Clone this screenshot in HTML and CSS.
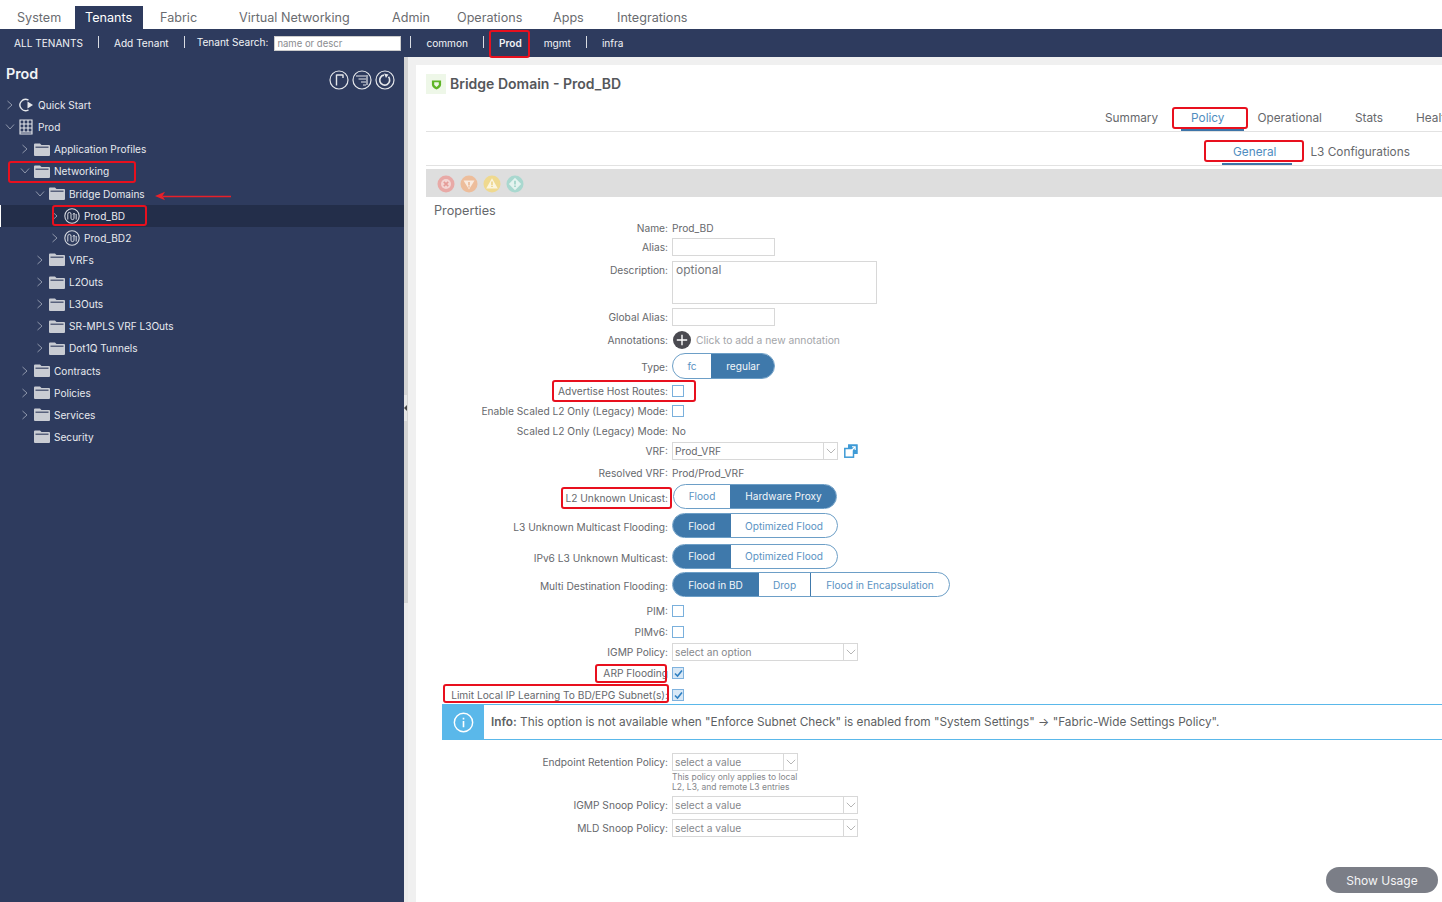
FILE: index.html
```html
<!DOCTYPE html>
<html lang="en">
<head>
<meta charset="utf-8">
<title>Bridge Domain - Prod_BD</title>
<link rel="stylesheet" href="styles.css">
</head>
<body>
<svg class="defs" width="0" height="0" aria-hidden="true">
  <symbol id="folder" viewBox="0 0 16 13">
    <path d="M0 1.5Q0 .5 1 .5H6L7.5 2H15Q16 2 16 3V12Q16 13 15 13H1Q0 13 0 12Z" fill="#c9ccd3"/>
    <rect x="1.5" y="3.6" width="13" height="1.2" fill="#3c4866"/>
  </symbol>
  <symbol id="chev-r" viewBox="0 0 8 10"><path d="M1.5 1 L6 5 L1.5 9" fill="none" stroke="#8f97ab" stroke-width="1"/></symbol>
  <symbol id="chev-d" viewBox="0 0 10 8"><path d="M1 1.5 L5 6 L9 1.5" fill="none" stroke="#8f97ab" stroke-width="1"/></symbol>
  <symbol id="bd" viewBox="0 0 16 16">
    <circle cx="8" cy="8" r="7.2" fill="none" stroke="#d5d8df" stroke-width="1.1"/>
    <path d="M3.8 11.5V6.2Q3.8 4.4 5.4 4.4T7 6.2V10.2Q7 11.6 8.5 11.6T10 10.2V5.2M10 5.2L8.9 6.5M10 5.2L11 6.5M12.2 11.5V6" fill="none" stroke="#d5d8df" stroke-width="1"/>
  </symbol>
  <symbol id="caret" viewBox="0 0 10 6"><path d="M.8 .8 L5 5 L9.2 .8" fill="none" stroke="#b5b5b5" stroke-width="1"/></symbol>
  <symbol id="tick" viewBox="0 0 11 11"><path d="M2 5.5 L4.5 8 L9 2.5" fill="none" stroke="#2f7fc1" stroke-width="1.6"/></symbol>
</svg>

<div class="app">
  <nav class="topbar">
    <span class="tab t1">System</span>
    <span class="tab t2 active">Tenants</span>
    <span class="tab t3">Fabric</span>
    <span class="tab t4">Virtual Networking</span>
    <span class="tab t5">Admin</span>
    <span class="tab t6">Operations</span>
    <span class="tab t7">Apps</span>
    <span class="tab t8">Integrations</span>
  </nav>

  <nav class="subnav">
    <span class="s1">ALL TENANTS</span><i class="bar"></i>
    <span>Add Tenant</span><i class="bar"></i>
    <span class="search-label">Tenant Search:</span>
    <input class="search" placeholder="name or descr">
    <i class="bar b-tight"></i>
    <span>common</span><i class="bar"></i>
    <span class="strong">Prod</span><i class="bar b-close"></i>
    <span>mgmt</span><i class="bar"></i>
    <span>infra</span>
  </nav>

  <div class="workspace">
    <aside class="sidebar">
      <div class="side-head">
        <h2>Prod</h2>
        <div class="side-tools">
          <svg class="tool" viewBox="0 0 20 20"><circle cx="10" cy="10" r="9" fill="none" stroke="#e4e6ea" stroke-width="1.2"/><path d="M7.5 15.5V4.5M7.5 5H14.5M14 5V8" fill="none" stroke="#e4e6ea" stroke-width="1.4"/></svg>
          <svg class="tool" viewBox="0 0 20 20"><circle cx="10" cy="10" r="9" fill="none" stroke="#e4e6ea" stroke-width="1.2"/><path d="M4 6H14M6.5 9H14M9 12H14M11 15H14M15 5V15" fill="none" stroke="#e4e6ea" stroke-width="1.2"/></svg>
          <svg class="tool" viewBox="0 0 20 20"><circle cx="10" cy="10" r="9" fill="none" stroke="#e4e6ea" stroke-width="1.2"/><path d="M13.5 6.8A5 5 0 1 1 9 5.1" fill="none" stroke="#e4e6ea" stroke-width="1.7"/><path d="M9 3.6L13.5 4.5L11 8Z" fill="#e4e6ea"/></svg>
        </div>
      </div>
      <ul class="tree">
        <li class="node l0">
          <svg class="chev"><use href="#chev-r"/></svg>
          <svg class="ico" viewBox="0 0 16 16"><path d="M10.5 3.2A5.6 5.6 0 1 0 10.5 12.8" fill="none" stroke="#e6e8ec" stroke-width="1.4"/><path d="M9.5 4.5L15 8L9.5 11.5Z" fill="#e6e8ec"/></svg>
          <span>Quick Start</span>
        </li>
        <li class="node l0">
          <svg class="chev down"><use href="#chev-d"/></svg>
          <svg class="ico" viewBox="0 0 16 16"><path d="M2 1H14V15H2ZM6 1V13M10 1V13M2 5H14M2 9H14M2 13H14" fill="none" stroke="#e6e8ec" stroke-width="1.1"/></svg>
          <span>Prod</span>
        </li>
        <li class="node l1"><svg class="chev"><use href="#chev-r"/></svg><svg class="fld"><use href="#folder"/></svg><span>Application Profiles</span></li>
        <li class="node l1"><svg class="chev down"><use href="#chev-d"/></svg><svg class="fld"><use href="#folder"/></svg><span>Networking</span></li>
        <li class="node l2"><svg class="chev down"><use href="#chev-d"/></svg><svg class="fld"><use href="#folder"/></svg><span>Bridge Domains</span></li>
        <li class="node l3 selected"><svg class="chev"><use href="#chev-r"/></svg><svg class="ico"><use href="#bd"/></svg><span>Prod_BD</span></li>
        <li class="node l3"><svg class="chev"><use href="#chev-r"/></svg><svg class="ico"><use href="#bd"/></svg><span>Prod_BD2</span></li>
        <li class="node l2"><svg class="chev"><use href="#chev-r"/></svg><svg class="fld"><use href="#folder"/></svg><span>VRFs</span></li>
        <li class="node l2"><svg class="chev"><use href="#chev-r"/></svg><svg class="fld"><use href="#folder"/></svg><span>L2Outs</span></li>
        <li class="node l2"><svg class="chev"><use href="#chev-r"/></svg><svg class="fld"><use href="#folder"/></svg><span>L3Outs</span></li>
        <li class="node l2"><svg class="chev"><use href="#chev-r"/></svg><svg class="fld"><use href="#folder"/></svg><span>SR-MPLS VRF L3Outs</span></li>
        <li class="node l2"><svg class="chev"><use href="#chev-r"/></svg><svg class="fld"><use href="#folder"/></svg><span>Dot1Q Tunnels</span></li>
        <li class="node l1"><svg class="chev"><use href="#chev-r"/></svg><svg class="fld"><use href="#folder"/></svg><span>Contracts</span></li>
        <li class="node l1"><svg class="chev"><use href="#chev-r"/></svg><svg class="fld"><use href="#folder"/></svg><span>Policies</span></li>
        <li class="node l1"><svg class="chev"><use href="#chev-r"/></svg><svg class="fld"><use href="#folder"/></svg><span>Services</span></li>
        <li class="node l1"><span class="chev"></span><svg class="fld"><use href="#folder"/></svg><span>Security</span></li>
      </ul>
    </aside>

    <div class="splitter"><span class="grip"></span></div>

    <main class="main">
      <div class="panel">
        <header class="title-row">
          <span class="health"><svg viewBox="0 0 12 12" width="11" height="11"><path d="M1 1.5H11V6Q11 9.5 6 11.5Q1 9.5 1 6Z" fill="#5fb526"/><path d="M3.5 3.6H8.5V5.8Q8.5 7.4 6 8.6Q3.5 7.4 3.5 5.8Z" fill="#eef7e8"/></svg></span>
          <h1>Bridge Domain - Prod_BD</h1>
        </header>

        <div class="tabs main-tabs">
          <span>Summary</span>
          <span class="on">Policy</span>
          <span>Operational</span>
          <span>Stats</span>
          <span>Health</span>
        </div>
        <div class="tabs sub-tabs">
          <span class="on">General</span>
          <span>L3 Configurations</span>
        </div>

        <div class="toolbar">
          <svg class="fault" viewBox="0 0 18 18"><circle cx="9" cy="9" r="8.5" fill="#e8a9a6"/><circle cx="9" cy="9" r="5" fill="#f3d6d4"/><path d="M6.8 6.8L11.2 11.2M11.2 6.8L6.8 11.2" stroke="#e59c98" stroke-width="1.7"/></svg>
          <svg class="fault" viewBox="0 0 18 18"><circle cx="9" cy="9" r="8.5" fill="#edbd9b"/><path d="M3.5 5.5H14.5L9 14.5Z" fill="#f9ebe0"/><path d="M9 7V10.5M9 11.3V12.5" stroke="#e8ae86" stroke-width="1.3"/></svg>
          <svg class="fault" viewBox="0 0 18 18"><circle cx="9" cy="9" r="8.5" fill="#efd98f"/><path d="M9 3.2L14.8 13.5H3.2Z" fill="#fbf5de"/><path d="M9 6.5V10M9 10.8V12" stroke="#e8cc72" stroke-width="1.3"/></svg>
          <svg class="fault" viewBox="0 0 18 18"><circle cx="9" cy="9" r="8.5" fill="#a9d8cf"/><path d="M9 2.8L15.2 9L9 15.2L2.8 9Z" fill="#e4f3ef"/><path d="M9 5.8V9.6M9 10.5V11.9" stroke="#93cdc1" stroke-width="1.4"/></svg>
        </div>

        <h3 class="section">Properties</h3>

        <form class="form">
          <div class="row h20"><label>Name:</label><span class="val">Prod_BD</span></div>
          <div class="row h18"><label>Alias:</label><input class="field"></div>
          <div class="row h50 top"><label>Description:</label><textarea class="area" placeholder="optional"></textarea></div>
          <div class="row h22"><label>Global Alias:</label><input class="field"></div>
          <div class="row h24"><label>Annotations:</label>
            <span class="add"><svg viewBox="0 0 18 18" width="18" height="18"><circle cx="9" cy="9" r="9" fill="#4a4a50"/><path d="M9 3.8V14.2M3.8 9H14.2" stroke="#fff" stroke-width="1.4"/></svg><span class="hint">Click to add a new annotation</span></span>
          </div>
          <div class="row h29"><label>Type:</label>
            <div class="seg seg-type"><b>fc</b><b class="sel">regular</b></div>
          </div>
          <div class="row h20"><label>Advertise Host Routes:</label><span class="cb"></span></div>
          <div class="row h20"><label>Enable Scaled L2 Only (Legacy) Mode:</label><span class="cb"></span></div>
          <div class="row h19"><label>Scaled L2 Only (Legacy) Mode:</label><span class="val">No</span></div>
          <div class="row h21"><label>VRF:</label>
            <div class="select w166"><span>Prod_VRF</span><i><svg><use href="#caret"/></svg></i></div>
            <svg class="open" viewBox="0 0 14 14" width="14" height="14"><rect x="4.5" y=".8" width="8.7" height="8.7" fill="#3f9bd6" stroke="#3f9bd6"/><rect x=".8" y="4.5" width="8.7" height="8.7" fill="#fff" stroke="#3f9bd6" stroke-width="1.5"/><path d="M6 8L11 3M8 2.8H11.2V6" fill="none" stroke="#fff" stroke-width="1.1"/></svg>
          </div>
          <div class="row h23"><label>Resolved VRF:</label><span class="val">Prod/Prod_VRF</span></div>
          <div class="row h27"><label>L2 Unknown Unicast:</label>
            <div class="seg seg-l2"><b>Flood</b><b class="sel">Hardware Proxy</b></div>
          </div>
          <div class="row h32"><label>L3 Unknown Multicast Flooding:</label>
            <div class="seg seg-l3"><b class="sel">Flood</b><b>Optimized Flood</b></div>
          </div>
          <div class="row h29"><label>IPv6 L3 Unknown Multicast:</label>
            <div class="seg seg-l3"><b class="sel">Flood</b><b>Optimized Flood</b></div>
          </div>
          <div class="row h28"><label>Multi Destination Flooding:</label>
            <div class="seg seg-multi"><b class="sel">Flood in BD</b><b>Drop</b><b>Flood in Encapsulation</b></div>
          </div>
          <div class="row h22"><label>PIM:</label><span class="cb"></span></div>
          <div class="row h20"><label>PIMv6:</label><span class="cb"></span></div>
          <div class="row h20"><label>IGMP Policy:</label>
            <div class="select w186"><span class="ph">select an option</span><i><svg><use href="#caret"/></svg></i></div>
          </div>
          <div class="row h22"><label>ARP Flooding</label><span class="cb checked"><svg viewBox="0 0 11 11"><use href="#tick"/></svg></span></div>
          <div class="row h21"><label>Limit Local IP Learning To BD/EPG Subnet(s):</label><span class="cb checked"><svg viewBox="0 0 11 11"><use href="#tick"/></svg></span></div>

          <div class="info">
            <span class="info-ico"><svg viewBox="0 0 22 22" width="21" height="21"><circle cx="11" cy="11" r="9.6" fill="none" stroke="#fff" stroke-width="1.5"/><path d="M11 9.5V16M11 6V7.8" stroke="#fff" stroke-width="1.7"/></svg></span>
            <p><strong>Info:</strong> This option is not available when "Enforce Subnet Check" is enabled from "System Settings" → "Fabric-Wide Settings Policy".</p>
          </div>

          <div class="row retention top"><label>Endpoint Retention Policy:</label>
            <div class="stack">
              <div class="select w126"><span class="ph">select a value</span><i><svg><use href="#caret"/></svg></i></div>
              <small>This policy only applies to local<br>L2, L3, and remote L3 entries</small>
            </div>
          </div>
          <div class="row h23"><label>IGMP Snoop Policy:</label>
            <div class="select w186"><span class="ph">select a value</span><i><svg><use href="#caret"/></svg></i></div>
          </div>
          <div class="row h23"><label>MLD Snoop Policy:</label>
            <div class="select w186"><span class="ph">select a value</span><i><svg><use href="#caret"/></svg></i></div>
          </div>
        </form>

        <button class="usage" type="button">Show Usage</button>
      </div>
    </main>
  </div>

  <div class="mark m-prod"></div>
  <div class="mark m-net"></div>
  <div class="mark m-bd"></div>
  <div class="mark m-policy"></div>
  <div class="mark m-general"></div>
  <div class="mark m-adv"></div>
  <div class="mark m-l2"></div>
  <div class="mark m-arp"></div>
  <div class="mark m-limit"></div>
  <svg class="arrow" viewBox="0 0 76 10" width="76" height="10"><path d="M76 5.5H8" stroke="#e8202a" stroke-width="1.3"/><path d="M0 5L10 .8L7.5 5L10 9.2Z" fill="#e8202a"/></svg>
</div>
</body>
</html>
```
FILE: styles.css
```css
* { box-sizing: border-box; }
html, body { margin: 0; height: 100%; overflow: hidden; }
body { font-family: Inter, "Liberation Sans", sans-serif; font-size: 11px; color: #5d5f63; background: #fff; }
.defs { position: absolute; }

.app { position: relative; width: 1442px; height: 902px; display: flex; flex-direction: column; overflow: hidden; }

/* top tabs */
.topbar { height: 29px; flex: none; display: flex; align-items: flex-end; background: #fff; font-size: 12.6px; color: #6a6c70; }
.tab { height: 23px; line-height: 23px; white-space: nowrap; }
.t1 { margin-left: 17px; width: 58px; }
.t2 { width: 68px; padding-left: 10px; }
.t3 { margin-left: 17px; width: 79px; }
.t4 { width: 153px; }
.t5 { width: 65px; }
.t6 { width: 96px; }
.t7 { width: 64px; }
.active { background: #2e3b5e; color: #fff; }

/* tenant bar */
.subnav { height: 28px; flex: none; display: flex; align-items: center; background: #2e3b5e; color: #f2f3f6; font-size: 10.1px; padding-left: 14px; white-space: nowrap; }
.bar { width: 1px; height: 12px; background: #d9dce3; margin: -2px 15px 0; }
.b-tight { margin-left: 9px; }
.b-close { margin: -2px 15px 0 6px; }
.strong { font-weight: 600; }
.search-label { margin-left: -3px; margin-right: 6px; margin-top: -2px; }
.search { width: 127px; height: 15px; border: 1px solid #ccc; background: #fff; padding: 0 2px; font: 9.5px Inter, sans-serif; color: #888; }
.search::placeholder { color: #8a8c90; opacity: 1; }

.workspace { flex: 1; display: flex; min-height: 0; }

/* sidebar */
.sidebar { width: 404px; flex: none; background: #2e3b5e; color: #e8eaef; }
.side-head { height: 37px; padding: 8px 9px 0 6px; display: flex; justify-content: space-between; }
.side-head h2 { margin: 0; font-size: 14.3px; font-weight: 600; color: #f2f3f6; line-height: 18px; }
.side-tools { display: flex; gap: 3px; margin-top: 5px; }
.tool { width: 20px; height: 20px; }
.tree { list-style: none; margin: 0; padding: 0; font-size: 10.1px; }
.node { height: 22.13px; display: flex; align-items: center; white-space: nowrap; }
.chev { width: 8px; height: 10px; flex: none; margin-right: 5px; }
.chev.down { width: 10px; height: 8px; margin-left: -1px; margin-right: 4px; }
.ico { width: 16px; height: 16px; flex: none; margin-right: 4px; }
.fld { width: 16px; height: 13px; flex: none; margin-right: 4px; }
.l0 { padding-left: 6px; }
.l1 { padding-left: 21px; }
.l2 { padding-left: 36px; }
.l3 { padding-left: 51px; }
.l0 .ico { margin-left: -1px; margin-right: 4px; }
.selected { background: #232e4a; box-shadow: inset 1px 0 0 #fff; }

.splitter { width: 4px; flex: none; background: linear-gradient(#d4d4d4 546px, #ececec 546px); position: relative; }
.grip { position: absolute; left: 0; top: 338px; width: 3px; height: 26px; background: #e6e6e6; }
.grip::after { content: ""; position: absolute; left: 0; top: 10px; border: 3px solid transparent; border-left: 0; border-right-color: #444; }

/* main */
.main { flex: 1; min-width: 0; background: #f0f0f0; padding: 8px 0 0 8px; }
.panel { position: relative; height: 100%; background: #fff; padding-left: 10px; overflow: hidden; }

.title-row { height: 43px; display: flex; align-items: flex-start; padding-top: 9px; gap: 4px; }
.health { width: 20px; height: 20px; background: #eef7e8; display: flex; align-items: center; justify-content: center; }
.title-row h1 { margin: 0; font-size: 14px; font-weight: 600; line-height: 20px; color: #55575b; }

.tabs { display: flex; font-size: 11.8px; color: #66686c; white-space: nowrap; }
.main-tabs { height: 24px; border-bottom: 1px solid #e2e2e2; padding-left: 679px; gap: 33px; align-items: flex-start; padding-top: 2px; }
.sub-tabs { height: 34px; border-bottom: 1px solid #e2e2e2; padding-left: 807px; gap: 34px; align-items: flex-start; padding-top: 12px; }
.tabs span { position: relative; line-height: 16px; }
.tabs .on { color: #4f8dc0; }
.main-tabs .on::after { content: ""; position: absolute; left: -10px; right: -19px; top: 19px; height: 2px; background: #3d74a8; }
.sub-tabs .on::after { content: ""; position: absolute; left: -11px; right: -16px; top: 19px; height: 2px; background: #3d74a8; }

.toolbar { margin-top: 3px; height: 28px; background: #dedede; display: flex; align-items: center; gap: 5px; padding: 2px 0 0 11px; }
.fault { width: 18px; height: 18px; }

.section { margin: 5px 0 0 8px; font-size: 12.7px; font-weight: 400; color: #66686c; line-height: 18px; height: 18px; }

/* form */
.form { margin-top: -2px; }
.row { display: flex; align-items: center; gap: 4px; }
.row.top { align-items: flex-start; }
.row label { width: 242px; flex: none; text-align: right; white-space: nowrap; font-size: 10.2px; line-height: 14px; color: #66686c; }
.row.top label { margin-top: 7px; }
.h18 { height: 18px; } .h19 { height: 19px; } .h20 { height: 20px; } .h21 { height: 21px; }
.h22 { height: 22px; } .h23 { height: 23px; } .h24 { height: 24px; } .h27 { height: 27px; }
.h28 { height: 28px; } .h29 { height: 29px; } .h32 { height: 32px; } .h50 { height: 50px; }
.val { font-size: 10.2px; color: #66686c; }
.field { width: 103px; height: 18px; border: 1px solid #d8d8d8; background: #fff; }
.area { width: 205px; height: 43px; margin-top: 5px; border: 1px solid #d8d8d8; background: #fff; padding: 0 3px; resize: none; font: 12px Inter, sans-serif; }
.area::placeholder { color: #76787c; opacity: 1; }
.add { display: flex; align-items: center; gap: 5px; margin-left: 1px; }
.hint { color: #a3a5a9; font-size: 10.3px; }

.seg { display: flex; height: 25px; margin-top: -3px; border: 1px solid #6d9fc7; border-radius: 13px; overflow: hidden; font-size: 10.1px; background: #fff; }
.seg b { font-weight: 400; color: #5b93c3; display: flex; align-items: center; justify-content: center; border-left: 1px solid #4079ab; }
.seg b:first-child { border-left: 0; }
.seg b.sel { background: #3f79ab; color: #f4f7fa; }
.seg-type { height: 26px; margin-top: -2px; }
.seg-type b:first-child { width: 38px; }
.seg-type b:last-child { width: 63px; }
.seg-l2 { margin-left: 1px; }
.seg-l2 b:first-child { width: 56px; }
.seg-l2 b:last-child { width: 106px; }
.seg-l3 b:first-child { width: 57px; }
.seg-l3 b:last-child { width: 107px; }
.seg-multi b:nth-child(1) { width: 85px; }
.seg-multi b:nth-child(2) { width: 52px; }
.seg-multi b:nth-child(3) { width: 139px; }

.cb { width: 12px; height: 12px; border: 1px solid #7ab0dc; background: #fff; display: block; }
.cb.checked { background: #d8e8f6; border-color: #7fb2de; }
.cb svg { display: block; width: 11px; height: 11px; margin: 0; }

.select { height: 18px; border: 1px solid #d8d8d8; background: #fff; display: flex; align-items: center; font-size: 10.2px; color: #66686c; }
.select span { flex: 1; padding-left: 2px; }
.select .ph { color: #85878b; }
.select i { width: 14px; height: 100%; border-left: 1px solid #d8d8d8; display: flex; align-items: center; justify-content: center; flex: none; }
.select i svg { width: 10px; height: 6px; }
.w166 { width: 166px; }
.w186 { width: 186px; }
.w126 { width: 126px; }
.open { margin-left: 2px; }

.info { margin: -1px 0 0 16px; height: 36px; display: flex; align-items: center; border-top: 1px solid #5ab8ea; border-bottom: 1px solid #5ab8ea; }
.info-ico { width: 42px; height: 36px; margin: -1px 0; flex: none; background: #5ab8ea; display: flex; align-items: center; justify-content: center; }
.info p { margin: 0 0 0 7px; font-size: 11.8px; color: #5d5f63; white-space: nowrap; }
.info strong { font-weight: 600; }

.retention { margin-top: 13px; height: 40px; }
.row.retention label { margin-top: 2px; }
.stack { display: flex; flex-direction: column; }
.stack small { margin-top: 1px; font-size: 8.5px; line-height: 10px; color: #85878b; white-space: nowrap; }

.usage { position: absolute; right: 4px; bottom: 9px; width: 112px; height: 26px; border: 0; border-radius: 13px; background: #7b7e87; color: #f5f5f6; font: 12px Inter, sans-serif; }

/* red annotations drawn on top of the screenshot */
.mark { position: absolute; border: 2px solid #e8101e; border-radius: 3px; pointer-events: none; }
.m-prod { left: 489px; top: 30px; width: 41px; height: 28px; }
.m-net { left: 8px; top: 161px; width: 128px; height: 22px; }
.m-bd { left: 52px; top: 205px; width: 95px; height: 21px; }
.m-policy { left: 1172px; top: 107px; width: 76px; height: 22px; }
.m-general { left: 1204px; top: 140px; width: 100px; height: 22px; }
.m-adv { left: 552px; top: 380px; width: 144px; height: 22px; }
.m-l2 { left: 561px; top: 487px; width: 111px; height: 22px; }
.m-arp { left: 595px; top: 664px; width: 72px; height: 19px; }
.m-limit { left: 443px; top: 684px; width: 226px; height: 19px; }
.arrow { position: absolute; left: 155px; top: 191px; }
```
